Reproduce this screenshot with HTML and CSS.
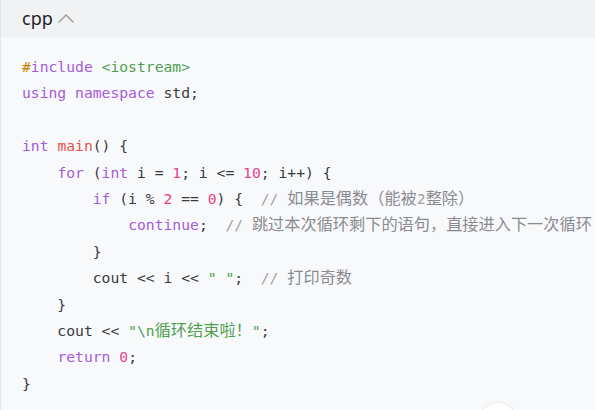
FILE: index.html
```html
<!DOCTYPE html>
<html lang="zh">
<head>
<meta charset="utf-8">
<link rel="stylesheet" href="styles.css">
</head>
<body>
<div class="card">
  <div class="head">
    <span class="lang">cpp</span>
    <svg class="chev" width="18" height="12" viewBox="0 0 18 12"><path d="M1.5 10.5 L9 3 L16.5 10.5" fill="none" stroke="#9a9a9a" stroke-width="1.3"/></svg>
  </div>
  <div class="code">
    <div class="line"><span class="mt">#</span><span class="kw">include</span> <span class="st">&lt;iostream&gt;</span></div>
    <div class="line"><span class="kw">using</span> <span class="kw">namespace</span> std;</div>
    <div class="line"> </div>
    <div class="line"><span class="kw">int</span> <span class="fn">main</span>() {</div>
    <div class="line">    <span class="kw">for</span> (<span class="kw">int</span> i = <span class="nm">1</span>; i &lt;= <span class="nm">10</span>; i++) {</div>
    <div class="line">        <span class="kw">if</span> (i % <span class="nm">2</span> == <span class="nm">0</span>) {  <span class="cm">// <span class="cjk">如果是偶数（能被</span>2<span class="cjk">整除）</span></span></div>
    <div class="line">            <span class="kw">continue</span>;  <span class="cm">// <span class="cjk">跳过本次循环剩下的语句，直接进入下一次循环</span></span></div>
    <div class="line">        }</div>
    <div class="line">        cout &lt;&lt; i &lt;&lt; <span class="st">" "</span>;  <span class="cm">// <span class="cjk">打印奇数</span></span></div>
    <div class="line">    }</div>
    <div class="line">    cout &lt;&lt; <span class="st">"\n<span class="cjk">循环结束啦！</span>"</span>;</div>
    <div class="line">    <span class="kw">return</span> <span class="nm">0</span>;</div>
    <div class="line">}</div>
  </div>
  <div class="fab"></div>
</div>
</body>
</html>
```
FILE: styles.css
```css
html, body {
  margin: 0;
  padding: 0;
  background: #f8f9fb;
  overflow: hidden;
}
.card {
  position: relative;
  width: 595px;
  height: 410px;
  border-left: 1px solid #e6e7ea;
  box-sizing: border-box;
  background: #f8f9fb;
  overflow: hidden;
}
.head {
  height: 37px;
  background: #f1f2f4;
  display: flex;
  align-items: center;
  padding-left: 21px;
  gap: 4px;
}
.lang {
  font-family: "Noto Sans", "Liberation Sans", sans-serif;
  font-size: 18px;
  color: #222226;
  line-height: 1;
  position: relative;
  top: -1px;
}
.chev {
  display: block;
  margin-top: -2px;
}
.code {
  padding: 17px 0 0 21px;
  font-family: "DejaVu Sans Mono", "Liberation Mono", "Noto Sans CJK SC", monospace;
  font-size: 14.7px;
  color: #383a42;
}
.line {
  white-space: pre;
  height: 26.4px;
  line-height: 26.4px;
}
.cjk {
  font-family: "Noto Sans CJK SC", sans-serif;
  font-size: 16.2px;
  line-height: 1;
}
.kw { color: #a65bd8; }
.mt { color: #c18401; }
.st { color: #50a14f; }
.fn { color: #e8524a; }
.nm { color: #e83e8c; }
.cm { color: #a0a1a7; }
.cm .cjk { color: #8a8b90; }
.fab {
  position: absolute;
  left: 479px;
  top: 403px;
  width: 36px;
  height: 36px;
  border-radius: 50%;
  background: #ffffff;
  box-shadow: 0 0 3px rgba(0, 0, 0, 0.12);
}
```
